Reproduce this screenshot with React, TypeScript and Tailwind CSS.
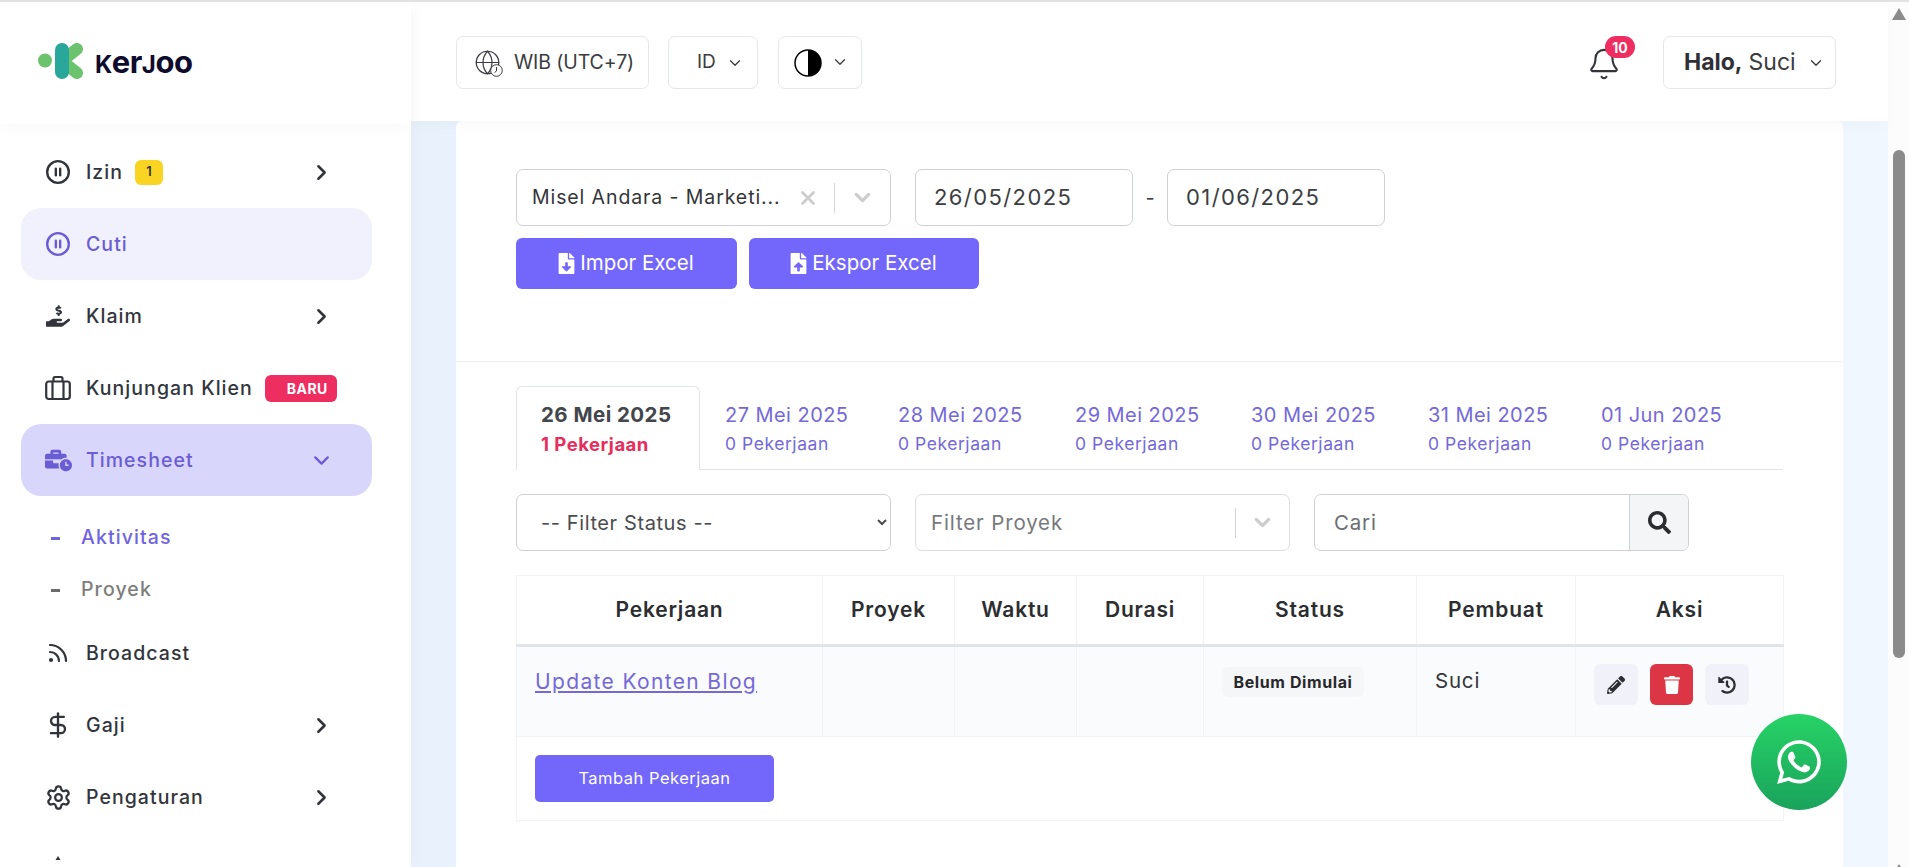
import type { ReactNode } from 'react';
import { Bell, ChevronDown, ChevronRight, CirclePause, DollarSign, Globe, Rss, Settings, X } from 'lucide-react';
import {
  FaBusinessTime,
  FaFileDownload,
  FaFileUpload,
  FaHandHoldingUsd,
  FaHistory,
  FaPencilAlt,
  FaSearch,
  FaTrash,
  FaWhatsapp,
} from 'react-icons/fa';

function Logo() {
  return (
    <div className="flex items-center gap-[10px] pl-[38px]">
      <svg width="47" height="36" viewBox="0 0 47 36">
        <circle cx="7" cy="17.5" r="7" fill="#6cc36e" />
        <path d="M24 18 L39 6 M24 18 L39 30" stroke="#6cc36e" strokeWidth="12" strokeLinecap="round" />
        <rect x="17" y="0" width="14" height="36" rx="7" fill="#2aa79b" />
      </svg>
      <span className="text-[31px] leading-none font-bold tracking-[-0.5px] text-[#0e0b2c] font-['Inter',sans-serif]">
        <span className="text-[24px]">K</span>er<span className="text-[24px]">J</span>oo
      </span>
    </div>
  );
}

function SuitcaseIcon() {
  return (
    <svg width="26" height="26" viewBox="0 0 26 26" fill="none" stroke="currentColor" strokeWidth="2.2" strokeLinejoin="round">
      <rect x="1.2" y="6.5" width="23.6" height="17.5" rx="2.5" />
      <path d="M7.5 6.5V24M18.5 6.5V24M8.5 6.5V3.5a1.5 1.5 0 0 1 1.5-1.5h6a1.5 1.5 0 0 1 1.5 1.5v3" />
    </svg>
  );
}

function Row({ icon, label, extra, arrow }: { icon: ReactNode; label: string; extra?: ReactNode; arrow?: boolean }) {
  return (
    <div className="ml-[21px] mr-[39px] flex h-[72px] items-center pl-[23px] pr-[38px] text-[#32343c]">
      <span className="flex w-[28px] shrink-0 justify-center">{icon}</span>
      <span className="ml-[14px] mt-[2px] whitespace-nowrap text-[19.5px] font-medium tracking-[1.05px]">{label}</span>
      {extra}
      {arrow && <ChevronRight size={25} strokeWidth={2.4} className="ml-auto mt-[1px]" />}
    </div>
  );
}

function Sidebar() {
  return (
    <aside className="z-20 flex w-[411px] shrink-0 flex-col bg-white shadow-[0_0_18px_rgba(0,0,0,0.03)] font-['Inter',sans-serif]">
      <div className="z-10 flex h-[122px] shrink-0 items-center bg-white pb-[4px] shadow-[0_6px_14px_rgba(0,0,0,0.025)]">
        <Logo />
      </div>
      <nav className="mb-[7px] flex-1 overflow-hidden pt-[12px]">
        <Row
          icon={<CirclePause size={26} strokeWidth={2.2} />}
          label="Izin"
          arrow
          extra={
            <span className="ml-[12px] flex h-[25px] w-[28px] items-center justify-center rounded-[6px] bg-[#f9d423] text-[13px] font-semibold">
              1
            </span>
          }
        />
        <div className="ml-[21px] mr-[39px] flex h-[72px] items-center rounded-[20px] bg-[#f1f0fd] pl-[23px] text-[#6a5cd4]">
          <span className="flex w-[28px] justify-center">
            <CirclePause size={26} strokeWidth={2.2} />
          </span>
          <span className="ml-[14px] mt-[2px] text-[19.5px] font-medium tracking-[1.05px]">Cuti</span>
        </div>
        <Row icon={<FaHandHoldingUsd size={24} />} label="Klaim" arrow />
        <Row
          icon={<SuitcaseIcon />}
          label="Kunjungan Klien"
          extra={
            <span className="ml-[12px] flex h-[27px] w-[72px] shrink-0 items-center justify-end rounded-[6px] bg-[#ee2d60] pr-[9px] text-[14px] font-bold tracking-[0.5px] text-white">
              BARU
            </span>
          }
        />
        <div className="ml-[21px] mr-[39px] flex h-[72px] items-center rounded-[20px] bg-[#d9d6fb] pl-[23px] pr-[38px] text-[#6a5cd4]">
          <span className="flex w-[28px] justify-center">
            <FaBusinessTime size={27} />
          </span>
          <span className="ml-[14px] mt-[2px] text-[19.5px] font-medium tracking-[1.05px]">Timesheet</span>
          <ChevronDown size={25} strokeWidth={2.2} className="ml-auto mt-[1px]" />
        </div>
        <div className="pt-[16px] pb-[1px]">
          <div className="flex h-[52px] items-center pl-[51px] text-[19.5px] font-medium tracking-[1.1px] text-[#6f63df]">
            <span className="h-[3px] w-[9px] bg-[#6f63df]" />
            <span className="ml-[21px]">Aktivitas</span>
          </div>
          <div className="flex h-[52px] items-center pl-[51px] text-[19.5px] font-medium tracking-[1.1px] text-[#7d7d7d]">
            <span className="h-[3px] w-[9px] bg-[#6b6b6b]" />
            <span className="ml-[21px]">Proyek</span>
          </div>
        </div>
        <Row icon={<Rss size={24} strokeWidth={2.2} />} label="Broadcast" />
        <Row icon={<DollarSign size={28} strokeWidth={2} />} label="Gaji" arrow />
        <Row icon={<Settings size={27} strokeWidth={2} />} label="Pengaturan" arrow />
        <div className="ml-[21px] flex h-[72px] items-center pl-[23px] text-[#32343c]">
          <svg width="28" height="26" viewBox="0 0 28 26" fill="currentColor">
            <path d="M14 0 L24 16 H4 Z" />
          </svg>
        </div>
      </nav>
    </aside>
  );
}

function HeaderBox({ children, className }: { children: ReactNode; className: string }) {
  return (
    <div className={`flex h-[53px] items-center rounded-[7px] border border-[#e6e7ea] bg-white ${className}`}>{children}</div>
  );
}

function GlobeClock() {
  return (
    <span className="relative flex h-[27px] w-[27px] items-center justify-center">
      <Globe size={27} strokeWidth={1.1} />
      <svg width="13" height="13" viewBox="0 0 13 13" className="absolute right-[-2px] bottom-[-1px]" fill="#fff" stroke="#3a3b40">
        <circle cx="6.5" cy="6.5" r="5.8" />
        <path d="M6.5 3V7L4.5 8.5" fill="none" />
      </svg>
    </span>
  );
}

function Header() {
  return (
    <header className="z-10 flex h-[119px] shrink-0 items-start bg-white pt-[34px] pl-[45px] pr-[52px] text-[#3a3b40] shadow-[0_6px_14px_rgba(0,0,0,0.025)]">
      <HeaderBox className="w-[193px] pl-[17px]">
        <GlobeClock />
        <span className="ml-[13px] text-[19.5px] tracking-[-0.1px]">WIB (UTC+7)</span>
      </HeaderBox>
      <HeaderBox className="ml-[19px] w-[90px] pl-[28px]">
        <span className="text-[19px]">ID</span>
        <ChevronDown size={18} strokeWidth={1.7} className="ml-[10px]" />
      </HeaderBox>
      <HeaderBox className="ml-[20px] w-[84px] pl-[15px]">
        <svg width="28" height="28" viewBox="0 0 28 28">
          <circle cx="14" cy="14" r="13" fill="#fff" stroke="#000" strokeWidth="1.5" />
          <path d="M14 1a13 13 0 0 1 0 26Z" fill="#000" />
        </svg>
        <ChevronDown size={18} strokeWidth={1.7} className="ml-[9px] -mt-[2px]" />
      </HeaderBox>
      <div className="relative ml-auto mt-[11px]">
        <Bell size={34} strokeWidth={1.5} className="text-[#33353a]" />
        <span className="absolute left-[18px] top-[-11px] flex h-[22px] w-[30px] items-center justify-center rounded-full bg-[#ee2d60] text-[14px] font-bold text-white">
          10
        </span>
      </div>
      <HeaderBox className="ml-[42px] w-[173px] pl-[20px] text-[23px] tracking-[0px]">
        <span className="font-bold text-[#2f3035]">Halo,</span>
        <span className="ml-[6px]">Suci</span>
        <ChevronDown size={18} strokeWidth={1.7} className="ml-[11px]" />
      </HeaderBox>
    </header>
  );
}

const days = [
  { date: '27 Mei 2025', w: 'w-[173px]' },
  { date: '28 Mei 2025', w: 'w-[177px]' },
  { date: '29 Mei 2025', w: 'w-[176px]' },
  { date: '30 Mei 2025', w: 'w-[177px]' },
  { date: '31 Mei 2025', w: 'w-[173px]' },
  { date: '01 Jun 2025', w: 'w-[176px]' },
];

function Tabs() {
  return (
    <div className="ml-[60px] mr-[60px] mt-[24px] flex h-[84px] border-b border-[#e1e4e8]">
      <div className="z-10 -mb-px h-[84px] w-[184px] rounded-t-[6px] border border-b-0 border-[#e1e4e8] bg-white pl-[24px] pt-[15px]">
        <div className="text-[20.5px] leading-[26px] font-bold tracking-[0.45px] text-[#43464b]">26 Mei 2025</div>
        <div className="mt-[4px] text-[18.5px] leading-[24px] font-bold tracking-[0.5px] text-[#e62e5c]">1 Pekerjaan</div>
      </div>
      {days.map((d) => (
        <div key={d.date} className={`${d.w} pl-[25px] pt-[16px] text-[#7468d8]`}>
          <div className="text-[20px] leading-[26px] tracking-[0.45px]">{d.date}</div>
          <div className="mt-[4px] text-[17.5px] leading-[24px] tracking-[0.55px]">0 Pekerjaan</div>
        </div>
      ))}
    </div>
  );
}

function Filters() {
  return (
    <div className="mx-[60px] mt-[24px] flex h-[57px] text-[20px] tracking-[0.6px]">
      <select className="h-[57px] w-[375px] rounded-[7px] border border-[#cfd1d4] bg-white pl-[20px] pr-[6px] text-[#4a4c50]">
        <option>-- Filter Status --</option>
      </select>
      <div className="ml-[24px] flex h-[57px] w-[375px] items-center rounded-[7px] border border-[#dcdee1] bg-white pl-[15px] text-[#77797c]">
        <span className="pt-[2px] text-[20.5px] tracking-[0.85px]">Filter Proyek</span>
        <span className="ml-auto h-[30px] w-px bg-[#d4d4d4]" />
        <ChevronDown size={25} strokeWidth={3} className="mx-[14px] text-[#cccccc]" />
      </div>
      <div className="ml-[24px] flex h-[57px] w-[375px] rounded-[7px] border border-[#cfd1d4] bg-white">
        <div className="flex w-[314px] items-center pl-[19px] pt-[2px] text-[20.5px] tracking-[0.8px] text-[#6b6d70]">Cari</div>
        <div className="flex flex-1 items-center justify-center rounded-r-[7px] border-l border-[#cfd1d4] bg-[#f4f5f6] text-[#2b2d30]">
          <FaSearch size={23} />
        </div>
      </div>
    </div>
  );
}

const columns = [
  { label: 'Pekerjaan', w: 'w-[306px]' },
  { label: 'Proyek', w: 'w-[132px]' },
  { label: 'Waktu', w: 'w-[122px]' },
  { label: 'Durasi', w: 'w-[127px]' },
  { label: 'Status', w: 'w-[213px]' },
  { label: 'Pembuat', w: 'w-[159px]' },
  { label: 'Aksi', w: 'w-[208px]' },
];

function TaskTable() {
  return (
    <table className="ml-[60px] mt-[24px] w-[1267px] table-fixed border-collapse text-[21px] tracking-[0.8px]">
      <thead>
        <tr className="h-[70px] border-b-[3px] border-[#e2e5e8]">
          {columns.map((c) => (
            <th key={c.label} className={`${c.w} border border-b-[3px] border-[#f1f3f5] border-b-[#e2e5e8] font-semibold text-[#2b2d30]`}>
              {c.label}
            </th>
          ))}
        </tr>
      </thead>
      <tbody>
        <tr className="h-[91px] bg-[#f9fbfd] align-top">
          <td className="border border-[#f1f3f5] pl-[18px] pt-[19px]">
            <a className="text-[#7468d8] underline tracking-[1.35px]">Update Konten Blog</a>
          </td>
          <td className="border border-[#f1f3f5]" />
          <td className="border border-[#f1f3f5]" />
          <td className="border border-[#f1f3f5]" />
          <td className="border border-[#f1f3f5] pl-[18px] pt-[20px]">
            <span className="flex h-[30px] w-[142px] items-center justify-center rounded-[6px] bg-[#f5f6f7] text-[16px] font-bold tracking-[0.6px] text-[#26282b]">
              Belum Dimulai
            </span>
          </td>
          <td className="border border-[#f1f3f5] pl-[18px] pt-[19px] text-[20.5px] tracking-[0.8px] text-[#33353a]">Suci</td>
          <td className="border border-[#f1f3f5] pl-[18px] pt-[17px]">
            <div className="flex gap-[12px]">
              <span className="flex h-[41px] w-[44px] items-center justify-center rounded-[6px] bg-[#f1f1fa] text-[#2b2d30]">
                <FaPencilAlt size={18} />
              </span>
              <span className="flex h-[41px] w-[43px] items-center justify-center rounded-[6px] bg-[#dc3545] text-white">
                <FaTrash size={18} />
              </span>
              <span className="flex h-[41px] w-[44px] items-center justify-center rounded-[6px] bg-[#f1f1fa] text-[#2b2d30]">
                <FaHistory size={18} />
              </span>
            </div>
          </td>
        </tr>
        <tr className="h-[84px] border border-[#f1f3f5]">
          <td colSpan={7} className="pl-[18px]">
            <button className="h-[47px] w-[239px] rounded-[5px] bg-[#7366fb] text-[16.5px] tracking-[0.5px] text-white">
              Tambah Pekerjaan
            </button>
          </td>
        </tr>
      </tbody>
    </table>
  );
}

function Card() {
  return (
    <div className="h-full w-[1387px] rounded-t-[6px] bg-white">
      <div className="flex items-center px-[60px] pt-[48px]">
        <div className="flex h-[57px] w-[375px] items-center rounded-[7px] border border-[#cfd1d4] pl-[15px] text-[19.5px] tracking-[0.9px] text-[#333539]">
          <span className="w-[247px] whitespace-nowrap">Misel Andara - Marketi...</span>
          <X size={22} strokeWidth={3} className="ml-[18px] text-[#cccccc]" />
          <span className="ml-[15px] h-[30px] w-px bg-[#d4d4d4]" />
          <ChevronDown size={25} strokeWidth={3} className="ml-[15px] text-[#cccccc]" />
        </div>
        <div className="ml-[24px] flex h-[57px] w-[218px] items-center rounded-[7px] border border-[#cfd1d4] pl-[18px] text-[22px] tracking-[1.4px] text-[#3c3e42]">
          26/05/2025
        </div>
        <span className="flex w-[34px] justify-center text-[20px] text-[#3c3e42]">-</span>
        <div className="flex h-[57px] w-[218px] items-center rounded-[7px] border border-[#cfd1d4] pl-[18px] text-[22px] tracking-[1.4px] text-[#3c3e42]">
          01/06/2025
        </div>
      </div>
      <div className="mt-[12px] flex gap-[12px] px-[60px] text-[20.5px] text-white">
        <button className="flex h-[51px] w-[221px] items-center justify-center gap-[3px] rounded-[6px] bg-[#7366fb] pr-[3px]">
          <FaFileDownload size={21} />
          Impor Excel
        </button>
        <button className="flex h-[51px] w-[230px] items-center justify-center gap-[3px] rounded-[6px] bg-[#7366fb] pr-[3px]">
          <FaFileUpload size={21} />
          Ekspor Excel
        </button>
      </div>
      <div className="mt-[72px] border-t border-[#edeff1]" />
      <Tabs />
      <Filters />
      <TaskTable />
    </div>
  );
}

function Scrollbar() {
  return (
    <div className="flex w-[21px] shrink-0 flex-col items-center bg-[#fcfcfd] pl-[1px] pt-[6px] text-[#8b8b8b]">
      <svg width="14" height="12" viewBox="0 0 14 12" fill="currentColor" className="shrink-0">
        <path d="M7 0 L14 12 H0 Z" />
      </svg>
      <div className="mt-[130px] h-[508px] w-[12px] shrink-0 rounded-[6px] bg-[#8b8b8b]" />
      <svg width="14" height="12" viewBox="0 0 14 12" fill="currentColor" className="mt-[206px] shrink-0">
        <path d="M7 0 L14 12 H0 Z" />
      </svg>
    </div>
  );
}

export default function App() {
  return (
    <div className="relative flex h-screen overflow-hidden border-t-2 border-[#e2e2e2] bg-white font-['Inter',sans-serif]">
      <Sidebar />
      <main className="flex min-w-0 flex-1 flex-col">
        <Header />
        <div className="flex-1 overflow-hidden bg-gradient-to-r from-[#e9f2fc] to-[#f1f7fe] px-[45px]">
          <Card />
        </div>
      </main>
      <Scrollbar />
      <button className="absolute right-[62px] top-[712px] z-30 flex h-[96px] w-[96px] items-center justify-center rounded-full bg-gradient-to-b from-[#27d366] to-[#1aa35c] text-white">
        <FaWhatsapp size={50} />
      </button>
    </div>
  );
}
